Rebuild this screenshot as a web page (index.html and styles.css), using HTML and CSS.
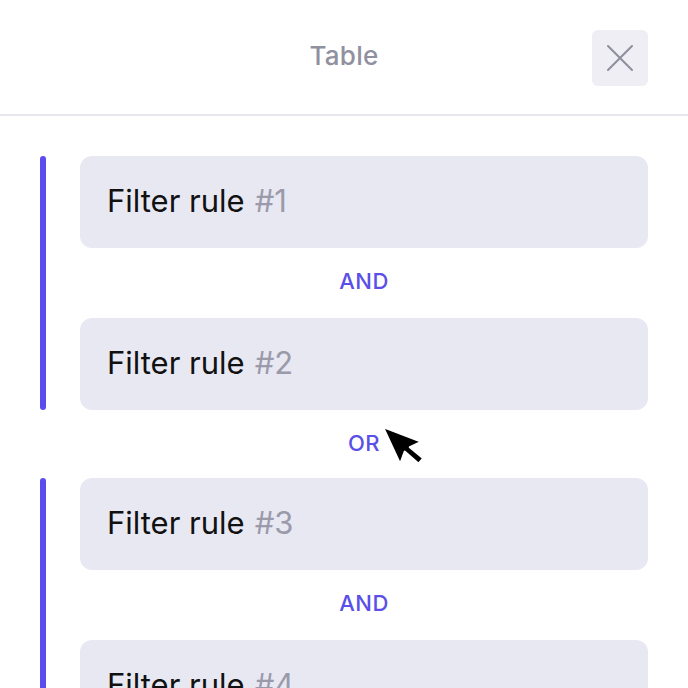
FILE: index.html
```html
<!DOCTYPE html>
<html lang="en">
<head>
  <meta charset="UTF-8">
  <meta name="viewport" content="width=device-width, initial-scale=1.0">
  <title>Table filters</title>
  <link rel="stylesheet" href="styles.css">
</head>
<body>
  <header class="topbar">
    <h1 class="title">Table</h1>
    <button class="close-btn" aria-label="Close">
      <svg width="28" height="28" viewBox="0 0 28 28">
        <path d="M2 2 L26 26 M26 2 L2 26" stroke="#8e8e9c" stroke-width="2" stroke-linecap="round"/>
      </svg>
    </button>
  </header>

  <main class="rules">
    <div class="group">
      <div class="group-bar"></div>
      <div class="group-items">
        <div class="rule">Filter rule <span class="num">#1</span></div>
        <div class="joiner">AND</div>
        <div class="rule">Filter rule <span class="num">#2</span></div>
      </div>
    </div>

    <div class="joiner joiner-or">
      <span class="or-label">OR
        <svg class="cursor" width="48" height="52" viewBox="0 0 48 52">
          <path d="M0 0 L0 22 L5 17 L9 26 L12.5 24.5 L8.5 16 L15.5 16 Z" fill="#000" stroke="#fff" stroke-width="1.1" stroke-linejoin="round" transform="translate(4 4) rotate(-25) scale(1.85)"/>
        </svg>
      </span>
    </div>

    <div class="group">
      <div class="group-bar"></div>
      <div class="group-items">
        <div class="rule">Filter rule <span class="num">#3</span></div>
        <div class="joiner">AND</div>
        <div class="rule">Filter rule <span class="num">#4</span></div>
      </div>
    </div>
  </main>
</body>
</html>
```

FILE: styles.css
```css
body {
  margin: 0;
  font-family: "Inter", "Lato", sans-serif;
  background: #fff;
  height: 688px;
  overflow: hidden;
}

.topbar {
  height: 116px;
  box-sizing: border-box;
  border-bottom: 2px solid #e6e6ec;
  display: flex;
  align-items: center;
  justify-content: center;
  position: relative;
}

.title {
  margin: 0;
  font-size: 26px;
  font-weight: 500;
  color: #9090a0;
  letter-spacing: 0.3px;
  margin-top: -4px;
}

.close-btn {
  position: absolute;
  right: 40px;
  top: 30px;
  width: 56px;
  height: 56px;
  border: none;
  border-radius: 6px;
  background: #eeeef4;
  display: flex;
  align-items: center;
  justify-content: center;
  padding: 0;
}

.rules {
  padding: 40px 40px 0 40px;
}

.group {
  display: flex;
  gap: 34px;
}

.group-bar {
  width: 6px;
  border-radius: 3px;
  background: #5b4cf0;
  flex-shrink: 0;
}

.group-items {
  flex: 1;
}

.rule {
  height: 92px;
  box-sizing: border-box;
  background: #e8e8f3;
  border-radius: 12px;
  padding-left: 27px;
  padding-bottom: 4px;
  display: flex;
  align-items: center;
  gap: 10px;
  font-size: 31px;
  color: #111;
}

.num {
  color: #9a9aaa;
}

.joiner {
  height: 70px;
  padding-bottom: 4px;
  box-sizing: border-box;
  display: flex;
  align-items: center;
  justify-content: center;
  font-size: 22px;
  font-weight: 500;
  color: #5a4fe6;
  letter-spacing: 0.5px;
}

.joiner-or {
  height: 68px;
  padding-left: 40px;
  padding-bottom: 2px;
}

.or-label {
  position: relative;
}

.cursor {
  position: absolute;
  left: 31px;
  top: -7px;
}
```
